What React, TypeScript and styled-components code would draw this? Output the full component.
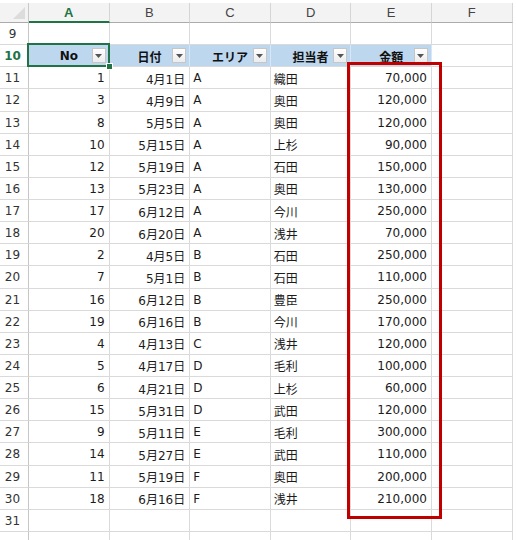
import React from "react";
import styled, { createGlobalStyle, css } from "styled-components";

const GlobalStyle = createGlobalStyle`
  html, body { margin: 0; padding: 0; background: #ffffff; }
  body { font-family: "DejaVu Sans", "Noto Sans CJK JP", sans-serif; }
`;

const COL_W = 80.6;
const ROW_H = 22.14;
const GRID = "#dadada";
const GREEN = "#217346";

const Page = styled.div`
  width: 516px;
  height: 540px;
  overflow: hidden;
  padding-top: 3px;
  box-sizing: border-box;
`;

const Sheet = styled.div`
  position: relative;
  display: grid;
  grid-template-columns: 29px repeat(6, ${COL_W}px);
  grid-template-rows: 20px;
  grid-auto-rows: ${ROW_H}px;
  width: max-content;
`;

const Corner = styled.div`
  background: #f3f3f3;
  border-right: 1px solid #c9c9c9;
  border-bottom: 1px solid #ababab;
  box-sizing: border-box;
  display: flex;
  align-items: flex-end;
  justify-content: flex-end;
  padding: 0 3px 3px 0;
`;

const ColHead = styled.div<{ $active?: boolean }>`
  background: #f3f3f3;
  box-sizing: border-box;
  border-right: 1px solid #d5d5d5;
  border-bottom: ${(p) => (p.$active ? `2px solid ${GREEN}` : "1px solid #ababab")};
  display: flex;
  align-items: center;
  justify-content: center;
  font-family: "Liberation Sans", Arial, sans-serif;
  font-size: 13px;
  color: ${(p) => (p.$active ? GREEN : "#444444")};
  font-weight: ${(p) => (p.$active ? 700 : 400)};
  padding-top: ${(p) => (p.$active ? "1px" : "0")};
`;

const RowHead = styled.div<{ $active?: boolean }>`
  background: #ffffff;
  box-sizing: border-box;
  border-right: 1px solid #c6c6c6;
  border-bottom: 1px solid ${GRID};
  display: flex;
  align-items: center;
  justify-content: center;
  padding-right: 3px;
  padding-top: 1px;
  font-size: 12px;
  color: ${(p) => (p.$active ? GREEN : "#333333")};
  font-weight: ${(p) => (p.$active ? 700 : 400)};
`;

const Cell = styled.div<{ $align?: "left" | "right" }>`
  box-sizing: border-box;
  border-right: 1px solid ${GRID};
  border-bottom: 1px solid ${GRID};
  background: #ffffff;
  display: flex;
  align-items: center;
  padding: 1px 4px 0 3px;
  font-size: 12px;
  color: #1b1b1b;
  white-space: nowrap;
  justify-content: ${(p) => (p.$align === "right" ? "flex-end" : "flex-start")};
`;

const HeaderCell = styled.div<{ $selected?: boolean }>`
  position: relative;
  box-sizing: border-box;
  background: #bdd7ee;
  border-right: 1px solid #d9e6f3;
  border-bottom: 1px solid ${GRID};
  display: grid;
  grid-template-columns: 17px 1fr 17px;
  align-items: center;
  font-size: 12px;
  font-weight: 700;
  color: #111111;
  ${(p) =>
    p.$selected &&
    css`
      &::after {
        content: "";
        position: absolute;
        left: -2px;
        top: -2px;
        right: -1px;
        bottom: -1px;
        border: 2px solid ${GREEN};
        pointer-events: none;
        z-index: 2;
      }
      &::before {
        content: "";
        position: absolute;
        right: -4px;
        bottom: -4px;
        width: 5px;
        height: 5px;
        background: ${GREEN};
        border: 1px solid #ffffff;
        z-index: 3;
      }
    `}
`;

const HeaderLabel = styled.span`
  grid-column: 2;
  text-align: center;
  padding-top: 1px;
`;

const DropButton = styled.span`
  grid-column: 3;
  justify-self: start;
  width: 14px;
  height: 15px;
  box-sizing: border-box;
  border: 1px solid #c6c6c6;
  background: linear-gradient(#ffffff, #ececec);
  display: flex;
  align-items: center;
  justify-content: center;
`;

const Highlight = styled.div`
  position: absolute;
  left: 347px;
  top: 59px;
  width: 95px;
  height: 457px;
  box-sizing: border-box;
  border: 3px solid #c00000;
  pointer-events: none;
  z-index: 4;
`;

type Row = [number, string, string, string, string];

const rows: Row[] = [
  [1, "4月1日", "A", "織田", "70,000"],
  [3, "4月9日", "A", "奥田", "120,000"],
  [8, "5月5日", "A", "奥田", "120,000"],
  [10, "5月15日", "A", "上杉", "90,000"],
  [12, "5月19日", "A", "石田", "150,000"],
  [13, "5月23日", "A", "奥田", "130,000"],
  [17, "6月12日", "A", "今川", "250,000"],
  [20, "6月20日", "A", "浅井", "70,000"],
  [2, "4月5日", "B", "石田", "250,000"],
  [7, "5月1日", "B", "石田", "110,000"],
  [16, "6月12日", "B", "豊臣", "250,000"],
  [19, "6月16日", "B", "今川", "170,000"],
  [4, "4月13日", "C", "浅井", "120,000"],
  [5, "4月17日", "D", "毛利", "100,000"],
  [6, "4月21日", "D", "上杉", "60,000"],
  [15, "5月31日", "D", "武田", "120,000"],
  [9, "5月11日", "E", "毛利", "300,000"],
  [14, "5月27日", "E", "武田", "110,000"],
  [11, "5月19日", "F", "奥田", "200,000"],
  [18, "6月16日", "F", "浅井", "210,000"],
];

const columns = ["A", "B", "C", "D", "E", "F"];
const headers = ["No", "日付", "エリア", "担当者", "金額"];

const Arrow = () => (
  <svg width="7" height="4" viewBox="0 0 7 4">
    <path d="M0 0 H7 L3.5 4 Z" fill="#555555" />
  </svg>
);

const CornerMark = () => (
  <svg width="12" height="12" viewBox="0 0 12 12">
    <path d="M12 0 V12 H0 Z" fill="#dcdcdc" />
  </svg>
);

const EmptyRow = ({ n }: { n?: number }) => (
  <>
    <RowHead>{n}</RowHead>
    {columns.map((c) => (
      <Cell key={c} />
    ))}
  </>
);

export default function App() {
  return (
    <Page>
      <GlobalStyle />
      <Sheet>
        <Corner>
          <CornerMark />
        </Corner>
        {columns.map((c) => (
          <ColHead key={c} $active={c === "A"}>
            {c}
          </ColHead>
        ))}

        <EmptyRow n={9} />

        <RowHead $active>10</RowHead>
        {headers.map((h, i) => (
          <HeaderCell key={h} $selected={i === 0}>
            <HeaderLabel>{h}</HeaderLabel>
            <DropButton>
              <Arrow />
            </DropButton>
          </HeaderCell>
        ))}
        <Cell />

        {rows.map((r, i) => (
          <React.Fragment key={i}>
            <RowHead>{11 + i}</RowHead>
            <Cell $align="right">{r[0]}</Cell>
            <Cell $align="right">{r[1]}</Cell>
            <Cell>{r[2]}</Cell>
            <Cell>{r[3]}</Cell>
            <Cell $align="right">{r[4]}</Cell>
            <Cell />
          </React.Fragment>
        ))}

        <EmptyRow n={31} />
        <EmptyRow />

        <Highlight />
      </Sheet>
    </Page>
  );
}
